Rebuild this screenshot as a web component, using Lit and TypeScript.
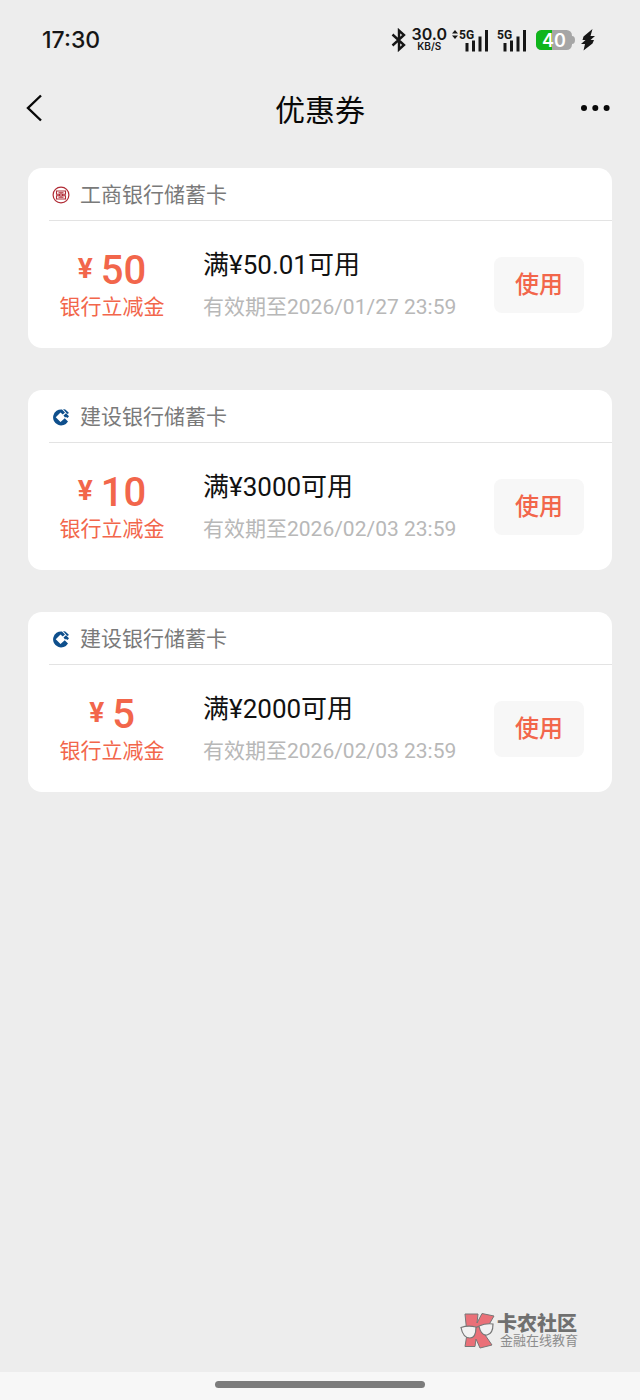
import { LitElement, html, css, svg } from "lit";
import { customElement, property } from "lit/decorators.js";

type Bank = "icbc" | "ccb";

interface Coupon {
  bank: Bank;
  card: string;
  amount: string;
  kind: string;
  condition: string;
  validity: string;
}

const coupons: Coupon[] = [
  { bank: "icbc", card: "工商银行储蓄卡", amount: "50", kind: "银行立减金", condition: "满¥50.01可用", validity: "有效期至2026/01/27 23:59" },
  { bank: "ccb", card: "建设银行储蓄卡", amount: "10", kind: "银行立减金", condition: "满¥3000可用", validity: "有效期至2026/02/03 23:59" },
  { bank: "ccb", card: "建设银行储蓄卡", amount: "5", kind: "银行立减金", condition: "满¥2000可用", validity: "有效期至2026/02/03 23:59" },
];

const icbcLogo = html`<svg width="18" height="18" viewBox="0 0 18 18" fill="none" stroke="#b02a34" aria-hidden="true">
  <circle cx="9" cy="9" r="7.900" stroke-width="1.200" />
  <path stroke-width="1.100" d="M4.500 5H13.500V8.200H10.500V9.800H13.500V13H4.500V9.800H7.500V8.200H4.500ZM6.500 6.700H11.500M6.500 11.300H11.500M9 6.700V11.300" />
</svg>`;

const ccbLogo = html`<svg width="18" height="18" viewBox="0 0 36 36" aria-hidden="true">
  <path fill="#0e4f8c" fill-rule="evenodd" d="M20 3A16 16 0 1 0 32 27L25.500 20.500L17 28L7.500 18.500L17 9L21.500 13L26 9Z" />
  <path fill="#0e4f8c" d="M22 2Q27 2 30 6L34 10L30.500 12ZM23 15L28 10.500L34 16.500L31 20L28 18L26 19Z" />
</svg>`;

const signal = (arrows: boolean) => html`<svg class="signal" width="38" height="24" viewBox="0 0 38 24" fill="#161616" role="img" aria-label="5G">
  ${arrows ? svg`<path d="M0 5.500L3 2L6 5.500ZM0 7.500L3 11L6 7.500Z" />` : null}
  <text x="7" y="11" font-size="12" font-weight="700">5G</text>
  <path d="M13.500 15h3v8.500h-3zM20 12.500h3v11h-3zM26.500 8.500h3v15h-3zM33 2h3v21.500h-3z" />
</svg>`;

@customElement("status-bar")
export class StatusBar extends LitElement {
  static styles = css`
    :host {
      display: flex;
      align-items: center;
      justify-content: space-between;
      height: 80px;
      padding: 0 45px 0 42px;
      color: #161616;
    }
    .time { font-size: 23px; font-weight: 500; font-family: Inter, sans-serif; }
    .icons { display: flex; align-items: center; font-family: Inter, sans-serif; }
    .rate {
      display: flex;
      flex-direction: column;
      align-items: center;
      margin: 0 5px;
      font-size: 16px;
      line-height: 12px;
      font-weight: 600;
    }
    .unit { font-size: 10px; line-height: 12px; }
    .signal { font-family: Roboto, sans-serif; }
    .battery { margin: 0 6px 0 8px; }
  `;

  render() {
    return html`
      <span class="time">17:30</span>
      <div class="icons">
        <svg width="16" height="24" viewBox="0 0 16 24" fill="none" stroke="#161616" stroke-width="2.4" role="img" aria-label="蓝牙">
          <path d="M1.500 6.500L13 17L8 21.500V2.500L13 7L1.500 17.500" />
        </svg>
        <div class="rate"><span>30.0</span><span class="unit">KB/S</span></div>
        ${signal(true)} ${signal(false)}
        <svg class="battery" width="39" height="22" viewBox="0 0 39 22" role="img" aria-label="40">
          <defs><clipPath id="cell"><rect x="0" y="1" width="36" height="20" rx="5.500" /></clipPath></defs>
          <g clip-path="url(#cell)">
            <rect width="36" height="22" fill="#a6a6a6" />
            <rect width="16" height="22" fill="#0fb51b" />
          </g>
          <path d="M36 7Q39 7 39 11T36 15Z" fill="#a6a6a6" />
          <text x="18" y="17.500" text-anchor="middle" font-size="18" font-weight="600" fill="#fff">40</text>
        </svg>
        <svg width="14" height="24" viewBox="0 0 14 24" fill="#161616" role="img" aria-label="充电">
          <path d="M11.500 1L2.500 8.500L1.500 12H4.500L0 16H4L2.500 22.500L11.500 15.500L13 12H9.500L14 8H9.500Z" />
        </svg>
      </div>
    `;
  }
}

@customElement("coupon-card")
export class CouponCard extends LitElement {
  @property({ attribute: false }) coupon!: Coupon;

  static styles = css`
    :host { display: block; }
    .card { background: #fff; border-radius: 14px; }
    .head {
      display: flex;
      align-items: center;
      gap: 10px;
      height: 53px;
      margin-left: 21px;
      padding: 2px 3px 0;
      border-bottom: 1px solid #e3e3e3;
      box-sizing: border-box;
    }
    .bank { margin: 0; font-size: 21px; line-height: 28px; font-weight: 400; color: #7a7a7a; }
    .body {
      display: flex;
      align-items: center;
      height: 127px;
      padding: 0 28px 0 26px;
      box-sizing: border-box;
    }
    .value { flex: none; width: 116px; padding-top: 8px; text-align: center; color: #f2664b; }
    .amount {
      display: flex;
      align-items: flex-start;
      justify-content: center;
      gap: 8px;
      padding-bottom: 4px;
      font-size: 40px;
      line-height: 32px;
      font-weight: 500;
    }
    .sign { font-size: 28px; line-height: 28px; font-weight: 700; }
    .kind, .valid { font-size: 21px; line-height: 32px; }
    .terms {
      display: flex;
      flex-direction: column;
      gap: 6px;
      flex: 1;
      min-width: 0;
      margin-left: 33px;
      padding-bottom: 2px;
      white-space: nowrap;
    }
    .condition { font-size: 26px; line-height: 40px; color: #111; }
    .valid { color: #b8b8b8; }
    .use {
      flex: none;
      width: 90px;
      height: 56px;
      padding: 0 0 4px;
      border: 0;
      border-radius: 8px;
      background: #f7f7f7;
      color: #f2664b;
      font: inherit;
      font-size: 24px;
      font-weight: 500;
    }
    p { margin: 0; }
  `;

  render() {
    const c = this.coupon;
    return html`<article class="card">
      <header class="head">
        ${c.bank === "icbc" ? icbcLogo : ccbLogo}
        <h2 class="bank">${c.card}</h2>
      </header>
      <div class="body">
        <div class="value">
          <p class="amount"><span class="sign">¥</span><span>${c.amount}</span></p>
          <p class="kind">${c.kind}</p>
        </div>
        <div class="terms">
          <p class="condition">${c.condition}</p>
          <p class="valid">${c.validity}</p>
        </div>
        <button class="use" type="button">使用</button>
      </div>
    </article>`;
  }
}

@customElement("app-root")
export class AppRoot extends LitElement {
  static styles = css`
    :host {
      display: flex;
      flex-direction: column;
      min-height: 100vh;
      background: #ededed;
      font-family: Roboto, "Noto Sans CJK SC", sans-serif;
    }
    .nav {
      display: grid;
      grid-template-columns: 1fr auto 1fr;
      align-items: center;
      height: 56px;
      padding: 0 24px;
    }
    .title { margin: 0; padding-top: 5px; font-size: 30px; line-height: 40px; font-weight: 400; color: #080808; }
    .tool { display: flex; padding: 0; border: 0; background: none; }
    .more { justify-self: end; }
    .list {
      display: flex;
      flex-direction: column;
      gap: 42px;
      margin: 0;
      padding: 32px 28px;
      list-style: none;
    }
    .mark {
      display: flex;
      align-items: center;
      gap: 2px;
      margin: auto 62px 23px auto;
      color: #707070;
    }
    .name { margin: 0; font-size: 20px; line-height: 20px; font-weight: 900; }
    .sub { margin: 0 0 0 3px; font-size: 13px; line-height: 14px; color: #8c8c8c; }
    .home { display: flex; justify-content: center; align-items: center; height: 28px; padding-bottom: 4px; box-sizing: border-box; background: #f7f7f7; }
    .pill { width: 210px; height: 7px; border-radius: 4px; background: #7c7c7c; }
  `;

  render() {
    return html`
      <status-bar></status-bar>
      <header class="nav">
        <button class="tool" type="button" aria-label="返回">
          <svg width="20" height="30" viewBox="0 0 20 30" fill="none" stroke="#080808" stroke-width="2.4">
            <path d="M17 2.500L4 15L17 27.500" />
          </svg>
        </button>
        <h1 class="title">优惠券</h1>
        <button class="tool more" type="button" aria-label="更多">
          <svg width="36" height="10" viewBox="0 0 36 10" fill="#080808">
            <circle cx="4" cy="5" r="3" /><circle cx="15.300" cy="5" r="3" /><circle cx="26.600" cy="5" r="3" />
          </svg>
        </button>
      </header>
      <ul class="list">
        ${coupons.map((c) => html`<li><coupon-card .coupon=${c}></coupon-card></li>`)}
      </ul>
      <footer class="mark">
        <svg width="35" height="37" viewBox="0 0 35 37" aria-hidden="true">
          <path fill="#ea7078" stroke="#777" stroke-width="1" d="M5 2H18L17 11L22 1.500L34 4L27 16L23 20L32 33L20 36L16 27L15 34.500H5L7 22Z" />
          <path fill="#f2f2f2" stroke="#777" stroke-width="1.200" d="M1 15.500Q8 13 16 15Q16 26 10 26Q3 26 1 15.500ZM19 14Q26 11 33 12Q33 22 27 23Q21 24 19 14Z" />
          <path fill="none" stroke="#777" stroke-width="1.200" d="M16 16Q17.500 14 19 15" />
        </svg>
        <div>
          <p class="name">卡农社区</p>
          <p class="sub">金融在线教育</p>
        </div>
      </footer>
      <div class="home"><div class="pill"></div></div>
    `;
  }
}
